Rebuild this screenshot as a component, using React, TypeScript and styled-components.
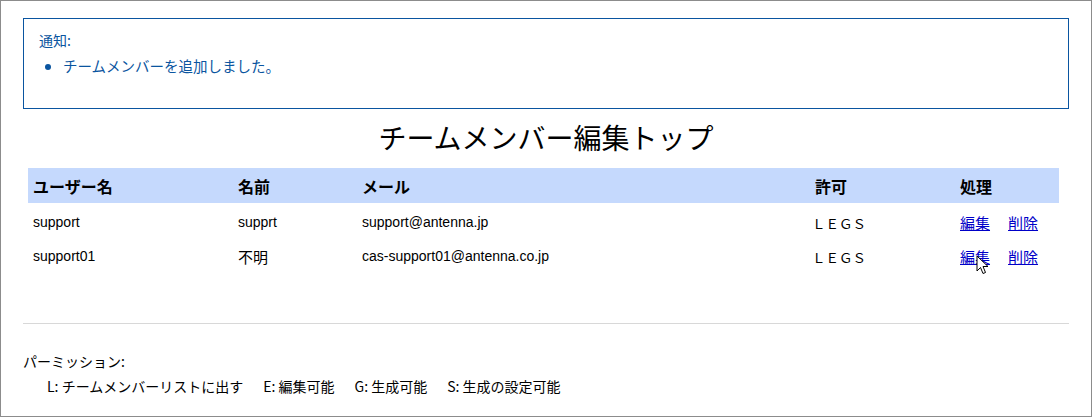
import React from "react";
import styled, { createGlobalStyle } from "styled-components";

const GlobalStyle = createGlobalStyle`
  html, body {
    margin: 0;
    padding: 0;
    background: #fff;
  }
  body {
    font-family: "Noto Sans CJK JP", "Liberation Sans", sans-serif;
    color: #000;
  }
`;

const Frame = styled.div`
  box-sizing: border-box;
  height: 417px;
  border: 1px solid #8c8c8c;
  padding: 17px 22px 0 22px;
`;

const Notice = styled.div`
  box-sizing: border-box;
  height: 91px;
  border: 1px solid #0a55a0;
  padding: 11px 15px 0 15px;
  color: #0a55a0;
  font-size: 14px;
  line-height: 20px;
`;

const NoticeList = styled.ul`
  margin: 6px 0 0 0;
  padding-left: 24px;
  font-size: 14.5px;
`;

const Title = styled.h1`
  margin: 8px 0 11px 0;
  font-size: 28px;
  line-height: 40px;
  font-weight: 400;
  text-align: center;
`;

const Table = styled.table`
  width: 1031px;
  margin-left: 5px;
  border-collapse: collapse;
  table-layout: fixed;
`;

const HeadCell = styled.th<{ $w: number }>`
  box-sizing: border-box;
  width: ${(p) => p.$w}px;
  height: 35px;
  padding: 0 5px;
  background: #c5d9fd;
  text-align: left;
  font-size: 16px;
  font-weight: bold;
`;

const Row = styled.tr`
  &:first-child td {
    padding-top: 2px;
  }
`;

const Cell = styled.td<{ $latin?: boolean }>`
  position: relative;
  height: 34px;
  padding: 0 5px;
  vertical-align: middle;
  white-space: nowrap;
  font-family: ${(p) =>
    p.$latin
      ? `"Liberation Sans", "Noto Sans CJK JP", sans-serif`
      : `"Noto Sans CJK JP", sans-serif`};
  font-size: ${(p) => (p.$latin ? "14px" : "15px")};
`;

const Perm = styled.span`
  font-size: 13.5px;
  margin-left: -3px;
`;

const Link = styled.a`
  color: #0000c8;
  text-decoration: underline;
  font-size: 15px;
  margin-right: 18px;
  cursor: pointer;
`;

const Pointer = styled.svg`
  position: absolute;
  left: 21px;
  top: 16px;
  width: 13px;
  height: 21px;
  pointer-events: none;
`;

const Footer = styled.div`
  margin-top: 50px;
  border-top: 1px solid #d8d8d8;
  padding-top: 27px;
`;

const FooterTitle = styled.div`
  font-size: 14px;
  line-height: 20px;
`;

const Legend = styled.div`
  display: flex;
  gap: 20px;
  margin-top: 5px;
  padding-left: 24px;
  font-size: 14px;
  line-height: 20px;
`;

const columns = [
  { label: "ユーザー名", w: 205 },
  { label: "名前", w: 124 },
  { label: "メール", w: 453 },
  { label: "許可", w: 145 },
  { label: "処理", w: 104 },
];

const members = [
  { user: "support", name: "supprt", mail: "support@antenna.jp", hover: false },
  { user: "support01", name: "不明", mail: "cas-support01@antenna.co.jp", hover: true },
];

const legend = [
  "L: チームメンバーリストに出す",
  "E: 編集可能",
  "G: 生成可能",
  "S: 生成の設定可能",
];

const isLatin = (s: string) => !/[^\x00-\x7f]/.test(s);

export default function App() {
  return (
    <>
      <GlobalStyle />
      <Frame>
        <Notice>
          <div>通知:</div>
          <NoticeList>
            <li>チームメンバーを追加しました。</li>
          </NoticeList>
        </Notice>
        <Title>チームメンバー編集トップ</Title>
        <Table>
          <thead>
            <tr>
              {columns.map((c) => (
                <HeadCell key={c.label} $w={c.w}>
                  {c.label}
                </HeadCell>
              ))}
            </tr>
          </thead>
          <tbody>
            {members.map((m) => (
              <Row key={m.user}>
                <Cell $latin>{m.user}</Cell>
                <Cell $latin={isLatin(m.name)}>{m.name}</Cell>
                <Cell $latin>{m.mail}</Cell>
                <Cell>
                  <Perm>ＬＥＧＳ</Perm>
                </Cell>
                <Cell>
                  <Link>編集</Link>
                  <Link>削除</Link>
                  {m.hover && (
                    <Pointer viewBox="0 0 13 21">
                      <path
                        d="M1 1 L1 16 L4.5 12.5 L7 18.5 L9.5 17.5 L7 11.5 L12 11.5 Z"
                        fill="#fff"
                        stroke="#000"
                        strokeWidth="1"
                        strokeLinejoin="miter"
                      />
                    </Pointer>
                  )}
                </Cell>
              </Row>
            ))}
          </tbody>
        </Table>
        <Footer>
          <FooterTitle>パーミッション:</FooterTitle>
          <Legend>
            {legend.map((l) => (
              <span key={l}>{l}</span>
            ))}
          </Legend>
        </Footer>
      </Frame>
    </>
  );
}
